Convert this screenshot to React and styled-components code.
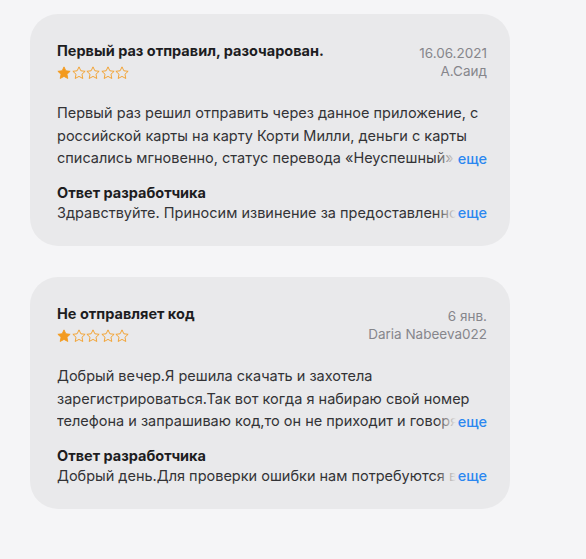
import React from 'react';
import styled, { createGlobalStyle } from 'styled-components';

const GlobalStyle = createGlobalStyle`
  body {
    margin: 0;
    background: #f5f5f7;
    font-family: Inter, "Noto Sans", "Liberation Sans", sans-serif;
  }
`;

const reviews = [
  {
    title: 'Первый раз отправил, разочарован.',
    date: '16.06.2021',
    author: 'А.Саид',
    rating: 1,
    text: 'Первый раз решил отправить через данное приложение, с российской карты на карту Корти Милли, деньги с карты списались мгновенно, статус перевода «Неуспешный». Деньги до сих пор не вернулись.',
    reply: 'Здравствуйте. Приносим извинение за предоставленное неудобство.',
  },
  {
    title: 'Не отправляет код',
    date: '6 янв.',
    author: 'Daria Nabeeva022',
    rating: 1,
    text: 'Добрый вечер.Я решила скачать и захотела зарегистрироваться.Так вот когда я набираю свой номер телефона и запрашиваю код,то он не приходит и говорят попробовать позже.',
    reply: 'Добрый день.Для проверки ошибки нам потребуются ваши данные.',
  },
];

function Star({ filled }) {
  return (
    <svg width="14" height="14" viewBox="0 0 24 24">
      <path
        d="M12 1.5l3.2 6.7 7.3.9-5.4 5 1.4 7.3L12 17.8l-6.5 3.6 1.4-7.3-5.4-5 7.3-.9z"
        fill={filled ? '#f39a1e' : 'none'}
        stroke="#f39a1e"
        strokeWidth="1.5"
        strokeLinejoin="round"
      />
    </svg>
  );
}

function Review({ review }) {
  return (
    <Card>
      <Header>
        <div>
          <Title>{review.title}</Title>
          <Stars>
            {[1, 2, 3, 4, 5].map((i) => (
              <Star key={i} filled={i <= review.rating} />
            ))}
          </Stars>
        </div>
        <Meta>
          <span>{review.date}</span>
          <span>{review.author}</span>
        </Meta>
      </Header>
      <Clamp lines={3}>
        <Body>{review.text}</Body>
        <More>еще</More>
      </Clamp>
      <Reply>
        <ReplyTitle>Ответ разработчика</ReplyTitle>
        <Clamp lines={1}>
          <ReplyText>{review.reply}</ReplyText>
          <More>еще</More>
        </Clamp>
      </Reply>
    </Card>
  );
}

export default function App() {
  return (
    <>
      <GlobalStyle />
      <Page>
        {reviews.map((r) => (
          <Review key={r.title} review={r} />
        ))}
      </Page>
    </>
  );
}

const Page = styled.div`
  display: flex;
  flex-direction: column;
  gap: 31px;
  padding: 14px 0 0 30px;
  width: 480px;
`;

const Card = styled.div`
  background: #e9e9eb;
  border-radius: 28px;
  padding: 27px 23px 22px 27px;
  height: 232px;
  box-sizing: border-box;
`;

const Header = styled.div`
  display: flex;
  justify-content: space-between;
  align-items: flex-start;
`;

const Title = styled.div`
  font-size: 14.5px;
  font-weight: 700;
  color: #1d1d1f;
  line-height: 20px;
`;

const Stars = styled.div`
  display: flex;
  gap: 0.5px;
  margin-top: 5px;
`;

const Meta = styled.div`
  display: flex;
  flex-direction: column;
  align-items: flex-end;
  font-size: 13.5px;
  line-height: 18px;
  color: #86868b;
  padding-top: 3px;
`;

const Clamp = styled.div`
  position: relative;
  overflow: hidden;
  max-height: ${(p) => (p.lines === 3 ? 67 : 20)}px;
  margin-top: ${(p) => (p.lines === 3 ? 22 : 0)}px;
`;

const Body = styled.p`
  margin: 0;
  font-size: 14.5px;
  line-height: 22.5px;
  color: #333336;
`;

const ReplyText = styled.p`
  margin: 0;
  font-size: 14.5px;
  line-height: 20px;
  color: #333336;
  white-space: nowrap;
`;

const More = styled.span`
  position: absolute;
  right: 0;
  bottom: 0;
  padding-left: 22px;
  font-size: 14.5px;
  font-weight: 500;
  line-height: 20px;
  color: #2b87f0;
  background: linear-gradient(to right, rgba(233, 233, 235, 0) 0, #e9e9eb 20px);
`;

const Reply = styled.div`
  margin-top: 14px;
`;

const ReplyTitle = styled.div`
  font-size: 14.5px;
  font-weight: 700;
  color: #1d1d1f;
  line-height: 20px;
`;
